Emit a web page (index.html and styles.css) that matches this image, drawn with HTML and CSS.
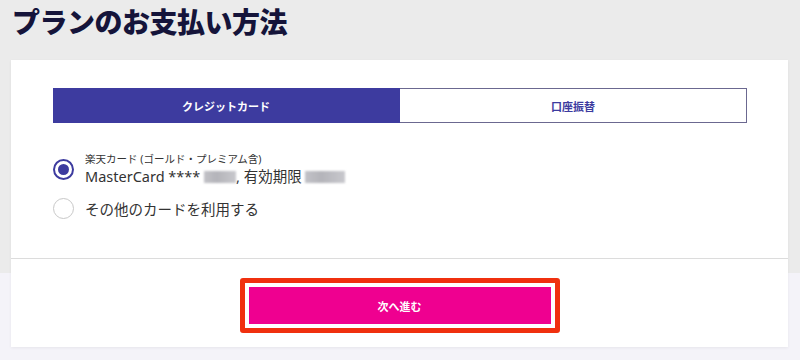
FILE: index.html
```html
<!DOCTYPE html>
<html lang="ja">
<head>
  <meta charset="UTF-8">
  <meta name="viewport" content="width=device-width, initial-scale=1.0">
  <title>プランのお支払い方法</title>
  <link rel="stylesheet" href="styles.css">
</head>
<body>
  <h1 class="page-title">プランのお支払い方法</h1>
  <div class="card">
    <div class="card-body">
      <div class="tabs">
        <div class="tab active">クレジットカード</div>
        <div class="tab">口座振替</div>
      </div>
      <div class="options">
        <label class="option">
          <span class="radio checked"></span>
          <span class="option-text">
            <span class="option-note">楽天カード (ゴールド・プレミアム含)</span>
            <span class="option-main">MasterCard **** <span class="masked short"></span>, 有効期限 <span class="masked"></span></span>
          </span>
        </label>
        <label class="option">
          <span class="radio"></span>
          <span class="option-text">
            <span class="option-main">その他のカードを利用する</span>
          </span>
        </label>
      </div>
    </div>
    <div class="card-footer">
      <div class="highlight">
        <button class="next-button">次へ進む</button>
      </div>
    </div>
  </div>
</body>
</html>
```

FILE: styles.css
```css
body {
  margin: 0;
  background: linear-gradient(to bottom, #ebebeb 0, #ebebeb 273px, #f4f3f9 273px);
  font-family: "Noto Sans", "Noto Sans CJK JP", sans-serif;
  color: #333;
  height: 360px;
  overflow: hidden;
}

.page-title {
  margin: 0;
  padding: 4px 12px 0;
  height: 56px;
  font-size: 28px;
  line-height: 36px;
  font-weight: 900;
  color: #15143a;
  letter-spacing: -0.5px;
}

.card {
  margin-left: 11px;
  width: 777px;
  background: #fff;
  box-shadow: 0 1px 3px rgba(0, 0, 0, 0.06);
}

.card-body {
  padding: 28px 41px 0 42px;
  height: 170px;
}

.tabs {
  display: flex;
  height: 35px;
}

.tab {
  flex: 1;
  display: flex;
  align-items: center;
  justify-content: center;
  font-size: 11px;
  font-weight: 700;
  color: #3d3b9f;
  border: 1px solid #6b6890;
  border-left: none;
}

.tab.active {
  background: #3d3b9f;
  color: #fff;
  border-color: #3d3b9f;
}

.options {
  padding-top: 30px;
  display: flex;
  flex-direction: column;
  gap: 12px;
}

.option {
  display: flex;
  align-items: center;
  gap: 11px;
}

.radio {
  box-sizing: border-box;
  width: 21px;
  height: 21px;
  border-radius: 50%;
  border: 1px solid #c8c8c8;
  flex: none;
  position: relative;
}

.radio.checked {
  border: 2px solid #3d3b9f;
}

.radio.checked::after {
  content: "";
  position: absolute;
  top: 3px;
  left: 3px;
  width: 11px;
  height: 11px;
  border-radius: 50%;
  background: #3d3b9f;
}

.option-text {
  display: flex;
  flex-direction: column;
}

.option-note {
  font-size: 10.5px;
  line-height: 13px;
  color: #333;
}

.option-main {
  font-size: 14.5px;
  line-height: 20px;
  color: #333;
}

.masked {
  display: inline-block;
  width: 40px;
  height: 12px;
  vertical-align: -1px;
  background: linear-gradient(to right, #c2c2c7, #b4b4ba 40%, #c8c8cd);
  filter: blur(1.2px);
}

.masked.short {
  width: 32px;
}

.card-footer {
  border-top: 1px solid #dcdcdc;
  height: 89px;
  display: flex;
  justify-content: center;
  padding-top: 19px;
  box-sizing: border-box;
}

.highlight {
  box-sizing: border-box;
  width: 320px;
  height: 55px;
  border: 5px solid #f0300f;
  border-radius: 3px;
  padding: 4px;
}

.next-button {
  display: block;
  width: 100%;
  height: 100%;
  border: none;
  background: #ef0090;
  color: #fff;
  font-family: "Noto Sans", "Noto Sans CJK JP", sans-serif;
  font-size: 11px;
  font-weight: 700;
  padding: 0;
}
```
